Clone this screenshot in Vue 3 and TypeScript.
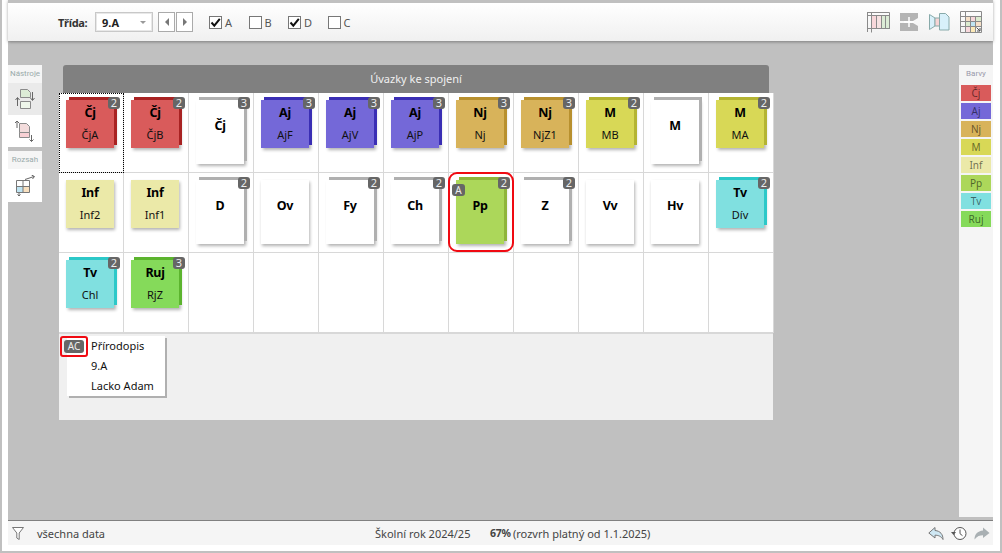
<script setup lang="ts">
interface Card {
  title?: string
  sub?: string
  color?: string
  count?: number
  stacked?: boolean
  flag?: string
  selected?: boolean
  focused?: boolean
}

const cards: Card[] = [
  { title: 'Čj', sub: 'ČjA', color: 'cj', count: 2, stacked: true, focused: true },
  { title: 'Čj', sub: 'ČjB', color: 'cj', count: 2, stacked: true },
  { title: 'Čj', count: 3, stacked: true },
  { title: 'Aj', sub: 'AjF', color: 'aj', count: 3, stacked: true },
  { title: 'Aj', sub: 'AjV', color: 'aj', count: 3, stacked: true },
  { title: 'Aj', sub: 'AjP', color: 'aj', count: 3, stacked: true },
  { title: 'Nj', sub: 'Nj', color: 'nj', count: 3, stacked: true },
  { title: 'Nj', sub: 'NjZ1', color: 'nj', count: 3, stacked: true },
  { title: 'M', sub: 'MB', color: 'm', count: 2, stacked: true },
  { title: 'M', stacked: true },
  { title: 'M', sub: 'MA', color: 'm', count: 2, stacked: true },

  { title: 'Inf', sub: 'Inf2', color: 'inf' },
  { title: 'Inf', sub: 'Inf1', color: 'inf' },
  { title: 'D', count: 2, stacked: true },
  { title: 'Ov' },
  { title: 'Fy', count: 2, stacked: true },
  { title: 'Ch', count: 2, stacked: true },
  { title: 'Pp', color: 'pp', count: 2, stacked: true, flag: 'A', selected: true },
  { title: 'Z', count: 2, stacked: true },
  { title: 'Vv' },
  { title: 'Hv' },
  { title: 'Tv', sub: 'Dív', color: 'tv', count: 2, stacked: true },

  { title: 'Tv', sub: 'Chl', color: 'tv', count: 2, stacked: true },
  { title: 'Ruj', sub: 'RjZ', color: 'ruj', count: 3, stacked: true },
  {}, {}, {}, {}, {}, {}, {}, {}, {},
]

const legend = [
  { label: 'Čj', color: 'cj' },
  { label: 'Aj', color: 'aj' },
  { label: 'Nj', color: 'nj' },
  { label: 'M', color: 'm' },
  { label: 'Inf', color: 'inf' },
  { label: 'Pp', color: 'pp' },
  { label: 'Tv', color: 'tv' },
  { label: 'Ruj', color: 'ruj' },
]

const groups = [
  { label: 'A', on: true },
  { label: 'B', on: false },
  { label: 'D', on: true },
  { label: 'C', on: false },
]
</script>

<template>
  <div class="frame">
    <!-- Toolbar -->
    <header class="toolbar">
      <span class="tb-label">Třída:</span>
      <div class="select"><b>9.A</b><i class="caret" /></div>
      <div class="steppers">
        <button class="step"><i class="tri left" /></button>
        <button class="step"><i class="tri right" /></button>
      </div>
      <div class="groups">
        <label v-for="g in groups" :key="g.label" class="check">
          <span class="box">
            <svg v-if="g.on" width="11" height="11" viewBox="0 0 11 11"><path d="M1.5 5.5 4.3 8.6 9.8 1.8" fill="none" stroke="#111" stroke-width="2" /></svg>
          </span>
          {{ g.label }}
        </label>
      </div>
      <div class="views">
        <svg width="23" height="21" viewBox="0 0 23 21">
          <path d="M5 4h5v13H5z" fill="#f8d7da" />
          <path d="M10 4h5v13h-5z" fill="#f6e2e2" />
          <path d="M15 4h7v13h-7z" fill="#dcecd6" />
          <path d="M0 .5h22.5M0 3.500h22.5M.5 0v20M4.500 .5v20M9.500 3.500v13M14.500 3.500v13M18.500 3.500v13M22.500 .5v16.500M1 16.500h21.500" fill="none" stroke="#8a8a8a" />
        </svg>
        <svg width="19" height="18" viewBox="0 0 19 18">
          <path d="M0 0h18v5l-5 3H0zM0 10h13l5 3v5H0z" fill="#b4b4b4" />
          <path d="M9 4v10M4 9h10" stroke="#fff" stroke-width="1.500" />
        </svg>
        <svg width="21" height="18" viewBox="0 0 21 18">
          <path d="M.5 1.500 6 5v8l-5.500 3.500z" fill="#d8f0fa" stroke="#8aa" />
          <path d="M6 5h4.500v8H6z" fill="#f6d4d4" stroke="#8aa" />
          <path d="M10.500 .5h6l3.500 3.500v13H10.500z" fill="#d8f0fa" stroke="#8aa" />
        </svg>
        <svg width="22" height="22" viewBox="0 0 22 22">
          <path d="M6 6h5v5H6z" fill="#f6e0c8" />
          <path d="M11 6h5v5h-5z" fill="#f8d8dc" />
          <path d="M16 6h5v5h-5z" fill="#dcecd0" />
          <path d="M6 11h5v5H6z" fill="#dcecd0" />
          <path d="M11 11h5v5h-5z" fill="#bfe4f2" />
          <path d="M16 11h5v5h-5z" fill="#f6e0c8" />
          <path d="M6 16h5v5H6z" fill="#f8d8dc" />
          <path d="M11 16h5v5h-5z" fill="#fbe9b8" />
          <path d="M.5 .5h21v21H.5zM.5 5.500h21M.5 10.500h21M.5 15.500h21M5.500 .5v21M10.500 5.500v16M15.500 5.500v16" fill="none" stroke="#8a8a8a" />
          <path d="M16.500 16.500l3.500 3.500M20 17v3h-3" fill="none" stroke="#555" />
        </svg>
      </div>
    </header>

    <div class="main">
      <!-- Tools -->
      <aside class="tools">
        <div class="tool-title">Nástroje</div>
        <div class="tool active">
          <svg width="20" height="21" viewBox="0 0 20 21">
            <path d="M5.500 .5h7l3 3v5h-10z" fill="#dcecd6" stroke="#8a8a8a" />
            <path d="M5.500 12.500h10v7h-10z" fill="#eef6ea" stroke="#8a8a8a" />
            <path d="M2.500 17v-8M.5 11l2-2.500 2 2.500M17.500 3v8M15.500 9l2 2.500 2-2.500" fill="none" stroke="#666" />
          </svg>
        </div>
        <div class="tool">
          <svg width="20" height="22" viewBox="0 0 20 22">
            <path d="M4.500 3.500h7l3 3v6h-10z" fill="#f3dcdc" stroke="#8a8a8a" />
            <path d="M4.500 12.500h10v5h-10z" fill="#f8d0d4" stroke="#8a8a8a" />
            <path d="M2 8V1M0 3l2-2 2 2M16.500 15v6.500M14.500 19.500l2 2 2-2" fill="none" stroke="#666" />
          </svg>
        </div>
        <div class="tool-title gap">Rozsah</div>
        <div class="tool tall">
          <svg width="21" height="21" viewBox="0 0 21 21">
            <path d="M2 11h6v6H2z" fill="#bfe4f2" />
            <path d="M8 11h6v6H8z" fill="#f8e0c0" />
            <path d="M1.500 5.500h13v12h-13zM1.500 11.500h13M8 5.500v12" fill="none" stroke="#777" />
            <path d="M10 4.500 19 1.500M16.500 0 19.500 1.500 17.500 4M4 18v3M2.500 19.500 4 21l1.500-1.500" fill="none" stroke="#666" />
          </svg>
        </div>
      </aside>

      <!-- Board -->
      <section class="board">
        <div class="board-title">Úvazky ke spojení</div>
        <div class="grid">
          <div v-for="(c, i) in cards" :key="i" class="cell" :class="{ focused: c.focused }">
            <div v-if="c.title" class="card" :class="[c.color, { tall: !c.sub, stacked: c.stacked }]">
              <b class="title">{{ c.title }}</b>
              <span v-if="c.sub" class="sub">{{ c.sub }}</span>
              <span v-if="c.flag" class="flag">{{ c.flag }}</span>
              <span v-if="c.count" class="count">{{ c.count }}</span>
            </div>
            <div v-if="c.selected" class="ring" />
          </div>
        </div>
        <div class="detail">
          <div class="popup">
            <div class="ac-wrap"><span class="ac">AC</span></div>
            <div class="popup-row strong">Přírodopis</div>
            <div class="popup-row">9.A</div>
            <div class="popup-row">Lacko Adam</div>
          </div>
        </div>
      </section>

      <!-- Colours -->
      <aside class="colours">
        <div class="colours-title">Barvy</div>
        <div v-for="l in legend" :key="l.label" class="swatch" :class="l.color">{{ l.label }}</div>
      </aside>
    </div>

    <!-- Status bar -->
    <footer class="status">
      <svg class="filter" width="12" height="13" viewBox="0 0 12 13">
        <path d="M.5 .5h11L7.200 6v6.500L4.800 11V6z" fill="#fff" stroke="#777" />
      </svg>
      <span class="all">všechna data</span>
      <span class="year">Školní rok 2024/25</span>
      <b class="pct">67%</b>
      <span class="valid">(rozvrh platný od 1.1.2025)</span>
      <div class="history">
        <svg width="16" height="13" viewBox="0 0 16 13">
          <path d="M7 .5.800 6 7 11V8.200c3 0 6 .8 8 4.300 0-5-2.500-8.500-8-9z" fill="#cfe8f4" stroke="#777" />
        </svg>
        <svg width="16" height="15" viewBox="0 0 16 15">
          <circle cx="9" cy="7.500" r="6" fill="#fff" stroke="#555" />
          <path d="M9 3.500v4.200l2.500 2" fill="none" stroke="#555" />
          <path d="M0 6h5L2.500 9z" fill="#555" />
        </svg>
        <svg width="16" height="13" viewBox="0 0 16 13">
          <path d="M9 .5 15.500 6 9 11V8.200c-3 0-6 .8-8.500 4.300C.5 7.500 3.500 4 9 3.500z" fill="#a9b0b3" />
        </svg>
      </div>
    </footer>
  </div>
</template>

<style scoped>
.frame {
  box-sizing: border-box;
  width: 1002px;
  height: 553px;
  display: flex;
  flex-direction: column;
  background: #fff;
  border-left: 2px solid #c0c0c0;
  border-right: 2px solid #c0c0c0;
  border-bottom: 2px solid #c0c0c0;
  padding: 0 7px 6px 6px;
  font-family: "Noto Sans", "Open Sans", sans-serif;
  font-size: 11px;
  color: #222;
  overflow: hidden;
}

/* Toolbar */
.toolbar {
  position: relative;
  z-index: 2;
  flex: none;
  height: 41px;
  box-sizing: border-box;
  display: flex;
  align-items: center;
  padding-left: 50px;
  border-top: 3px solid #c0c0c0;
  background: linear-gradient(#fff, #f0f0f0);
  box-shadow: 0 1px 3px rgba(0, 0, 0, 0.35);
}
.tb-label { width: 37px; font-weight: 700; color: #333; letter-spacing: -0.3px; }
.select {
  box-sizing: border-box;
  width: 58px;
  height: 20px;
  display: flex;
  align-items: center;
  justify-content: space-between;
  padding: 0 6px;
  background: #fff;
  border: 1px solid #c8c8c8;
  box-shadow: inset 0 0 0 1px #e8e8e8;
}
.select b { font-weight: 700; color: #222; }
.caret { border: 3px solid transparent; border-top: 3px solid #999; border-bottom: 0; width: 0; height: 0; }
.steppers { display: flex; gap: 1px; margin-left: 5px; }
.step {
  box-sizing: border-box;
  width: 17px;
  height: 20px;
  padding: 0;
  display: flex;
  align-items: center;
  justify-content: center;
  background: #fff;
  border: 1px solid #aaa;
}
.tri { width: 0; height: 0; border: 4px solid transparent; }
.tri.left { border-right: 4px solid #777; border-left: 0; }
.tri.right { border-left: 4px solid #777; border-right: 0; }
.groups { display: flex; margin-left: 16px; }
.check { width: 39.500px; display: flex; align-items: center; gap: 3px; color: #555; }
.box {
  box-sizing: border-box;
  width: 13px;
  height: 13px;
  display: flex;
  align-items: center;
  justify-content: center;
  background: #fff;
  border: 1px solid #777;
}
.views { margin-left: auto; margin-right: 11px; display: flex; align-items: center; gap: 10px; }

/* Main */
.main {
  flex: 1;
  min-height: 0;
  display: flex;
  align-items: flex-start;
  background: #c0c0c0;
  padding-top: 24px;
  border-bottom: 1px solid #808080;
  box-sizing: border-box;
}

/* Tools */
.tools { flex: none; width: 34px; }
.tool-title {
  height: 18px;
  line-height: 18px;
  text-align: center;
  font-family: Roboto, sans-serif;
  font-size: 8px;
  color: #9aa;
  background: #f5f5f5;
}
.tool-title.gap { margin-top: 4px; }
.tool {
  height: 32px;
  display: flex;
  align-items: center;
  justify-content: center;
  background: #fff;
}
.tool.active { background: #eaeaea; }
.tool.tall { height: 33px; }

/* Board */
.board { flex: none; width: 715px; margin-left: 17px; }
.board-title {
  box-sizing: border-box;
  width: 706px;
  height: 28px;
  margin-left: 4px;
  line-height: 27px;
  text-align: center;
  color: #f0f0f0;
  background: #808080;
  border-radius: 3px 3px 0 0;
}
.grid {
  display: grid;
  grid-template-columns: repeat(11, 65px);
  grid-auto-rows: 80px;
  background: #fff;
}
.cell {
  position: relative;
  box-sizing: border-box;
  padding: 7px 0 0 7px;
  border-right: 1px solid #d8d8d8;
  border-bottom: 1px solid #d8d8d8;
}
.cell.focused { outline: 1px dotted #000; outline-offset: -1px; }
.card {
  position: relative;
  box-sizing: border-box;
  width: 48px;
  height: 48px;
  display: flex;
  flex-direction: column;
  align-items: center;
  background: #fff;
  color: #000;
  padding-top: 4px;
  box-shadow: 1px 2px 3px rgba(0, 0, 0, 0.3);
  --back: #b0b0b0;
}
.card.stacked { box-shadow: 3px -3px 0 var(--back), 2px 2px 3px rgba(0, 0, 0, 0.3); }
.card.tall { height: 64px; padding-top: 17px; }
.title { font-size: 12.500px; line-height: 18px; font-weight: 700; letter-spacing: -0.3px; }
.sub { margin-top: 5px; font-size: 11px; line-height: 16px; color: #111; }
.count, .flag {
  position: absolute;
  top: -3px;
  left: 42px;
  width: 12px;
  height: 12px;
  border-radius: 3px;
  background: #666;
  color: #eee;
  font-size: 11px;
  line-height: 12px;
  text-align: center;
}
.flag { top: 4px; left: -4px; width: 13px; font-size: 10px; }
.ring {
  position: absolute;
  left: -1px;
  top: -1px;
  width: 66px;
  height: 80px;
  box-sizing: border-box;
  border: 2px solid #f00a12;
  border-radius: 9px;
  pointer-events: none;
}

.cj { background: #d95b5b; --back: #a82222; }
.aj { background: #7468d8; --back: #3a2eb4; }
.nj { background: #d8b35a; --back: #b8902e; }
.m { background: #d8d856; --back: #b4b432; }
.inf { background: #ebe9a8; --back: #cccc80; }
.pp { background: #acd75a; --back: #8fb53a; }
.tv { background: #80e0e0; --back: #2cc8c8; }
.ruj { background: #85da5a; --back: #5cb42e; }

/* Detail */
.detail {
  height: 87px;
  padding: 2px 0 0 8px;
  background: #f0f0f0;
  border-top: 1px solid #d8d8d8;
  box-sizing: border-box;
  margin-right: 1px;
}
.popup {
  position: relative;
  box-sizing: border-box;
  width: 98px;
  height: 60px;
  background: #fff;
  box-shadow: 2px 2px 0 #b0b0b0;
}
.popup-row { height: 20px; line-height: 20px; padding-left: 24px; color: #111; }
.ac-wrap {
  position: absolute;
  left: -7px;
  top: 0;
  box-sizing: border-box;
  width: 28px;
  height: 21px;
  display: flex;
  align-items: center;
  justify-content: center;
  border: 2px solid #f00a12;
  border-radius: 3px;
}
.ac {
  width: 20px;
  height: 13px;
  border-radius: 3px;
  background: #666;
  color: #eee;
  font-size: 10px;
  line-height: 13px;
  text-align: center;
}

/* Colours */
.colours {
  box-sizing: border-box;
  flex: none;
  width: 34px;
  height: 452px;
  margin-left: 185px;
  padding: 0 2px;
  background: #f5f5f5;
}
.colours-title {
  height: 20px;
  line-height: 18px;
  text-align: center;
  font-family: Roboto, sans-serif;
  font-size: 8px;
  color: #99a;
}
.swatch {
  height: 16px;
  margin-bottom: 2px;
  line-height: 16px;
  text-align: center;
  font-size: 10px;
  color: rgba(0, 0, 0, 0.55);
}

/* Status */
.status {
  flex: none;
  height: 24px;
  display: flex;
  align-items: center;
  background: #f5f5f5;
  color: #444;
}
.filter { margin-left: 4px; }
.all { margin-left: 13px; width: 338px; }
.year { width: 115px; }
.pct { width: 23px; font-size: 10.500px; font-weight: 700; letter-spacing: -0.3px; }
.history { margin-left: auto; margin-right: 3px; display: flex; align-items: center; gap: 7px; }
</style>

<style>
body { background: #fff; }
</style>
